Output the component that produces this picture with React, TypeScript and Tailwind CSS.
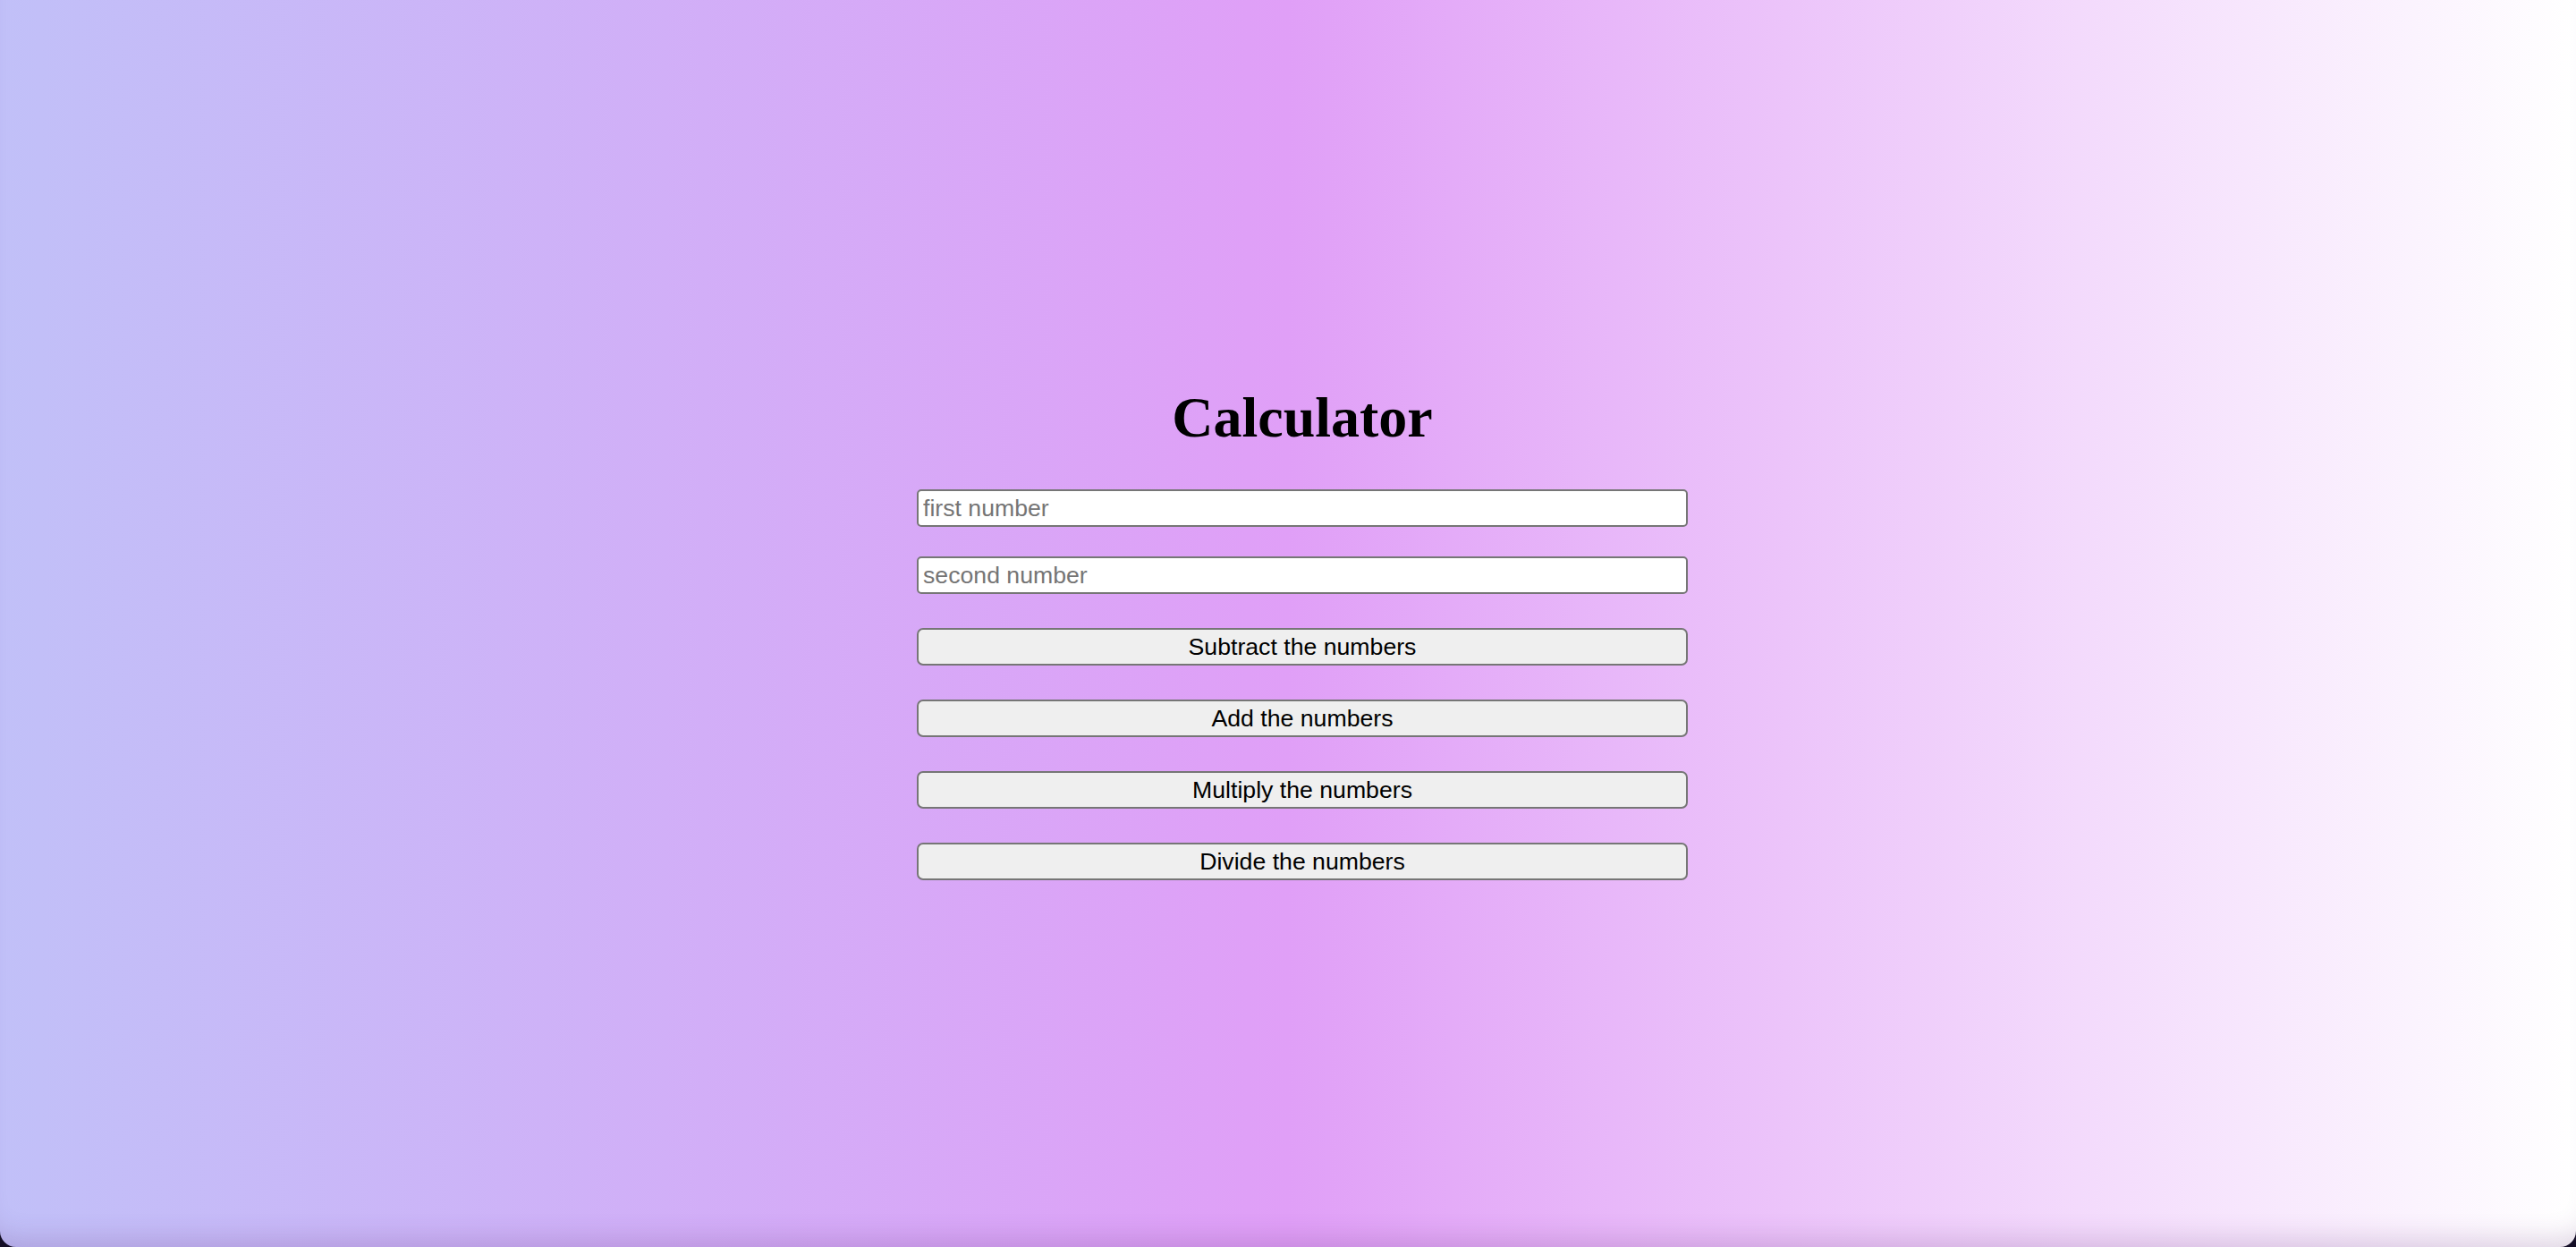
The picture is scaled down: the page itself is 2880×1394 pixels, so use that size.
import React, { useState } from "react";

const App = () => {
  const [first, setFirst] = useState<string>("");
  const [second, setSecond] = useState<string>("");
  const [result, setResult] = useState<number | null>(null);

  const calc = (op: string) => {
    const a = parseFloat(first);
    const b = parseFloat(second);
    if (isNaN(a) || isNaN(b)) return;
    if (op == "-") setResult(a - b);
    else if (op == "+") setResult(a + b);
    else if (op == "*") setResult(a * b);
    else setResult(a / b);
  };

  const buttons = [
    { label: "Subtract the numbers", op: "-" },
    { label: "Add the numbers", op: "+" },
    { label: "Multiply the numbers", op: "*" },
    { label: "Divide the numbers", op: "/" },
  ];

  return (
    <div className="h-[1394px] w-full bg-[#140e26] overflow-hidden">
      <div className="h-full w-full rounded-b-[18px] bg-[linear-gradient(to_right,#c1c0f8_0%,#e09ff7_50%,#ffffff_100%)] shadow-[inset_0_-30px_30px_-22px_rgba(90,40,110,0.2)] flex flex-col items-center pt-[430px] pl-[32px]">
        <h1 className="m-0 text-[64px] font-bold leading-[1.149] text-black font-['Liberation_Serif','Times_New_Roman',serif]">
          Calculator
        </h1>
        <div className="w-[862px] flex flex-col mt-[43px] font-['Liberation_Sans',Arial,sans-serif] text-[26.67px]">
          <input
            type="text"
            placeholder="first number"
            value={first}
            onChange={(e) => setFirst(e.target.value)}
            className="h-[42px] w-full bg-white border-2 border-[#767676] rounded-[5px] px-[5px] pt-[2px] text-black placeholder:text-[#757575] outline-none"
          />
          <input
            type="text"
            placeholder="second number"
            value={second}
            onChange={(e) => setSecond(e.target.value)}
            className="h-[42px] w-full mt-[33px] bg-white border-2 border-[#767676] rounded-[5px] px-[5px] pt-[2px] text-black placeholder:text-[#757575] outline-none"
          />
          {buttons.map((b) => (
            <button
              key={b.op}
              onClick={() => calc(b.op)}
              className="h-[42px] w-full mt-[38px] bg-[#efefef] border-2 border-[#767676] rounded-[7px] pt-[2px] text-black leading-none"
            >
              {b.label}
            </button>
          ))}
          {/* result only shows after a button is clicked */}
          {result !== null && (
            <p className="mt-6 text-center text-black">{result}</p>
          )}
        </div>
      </div>
    </div>
  );
};

export default App;
